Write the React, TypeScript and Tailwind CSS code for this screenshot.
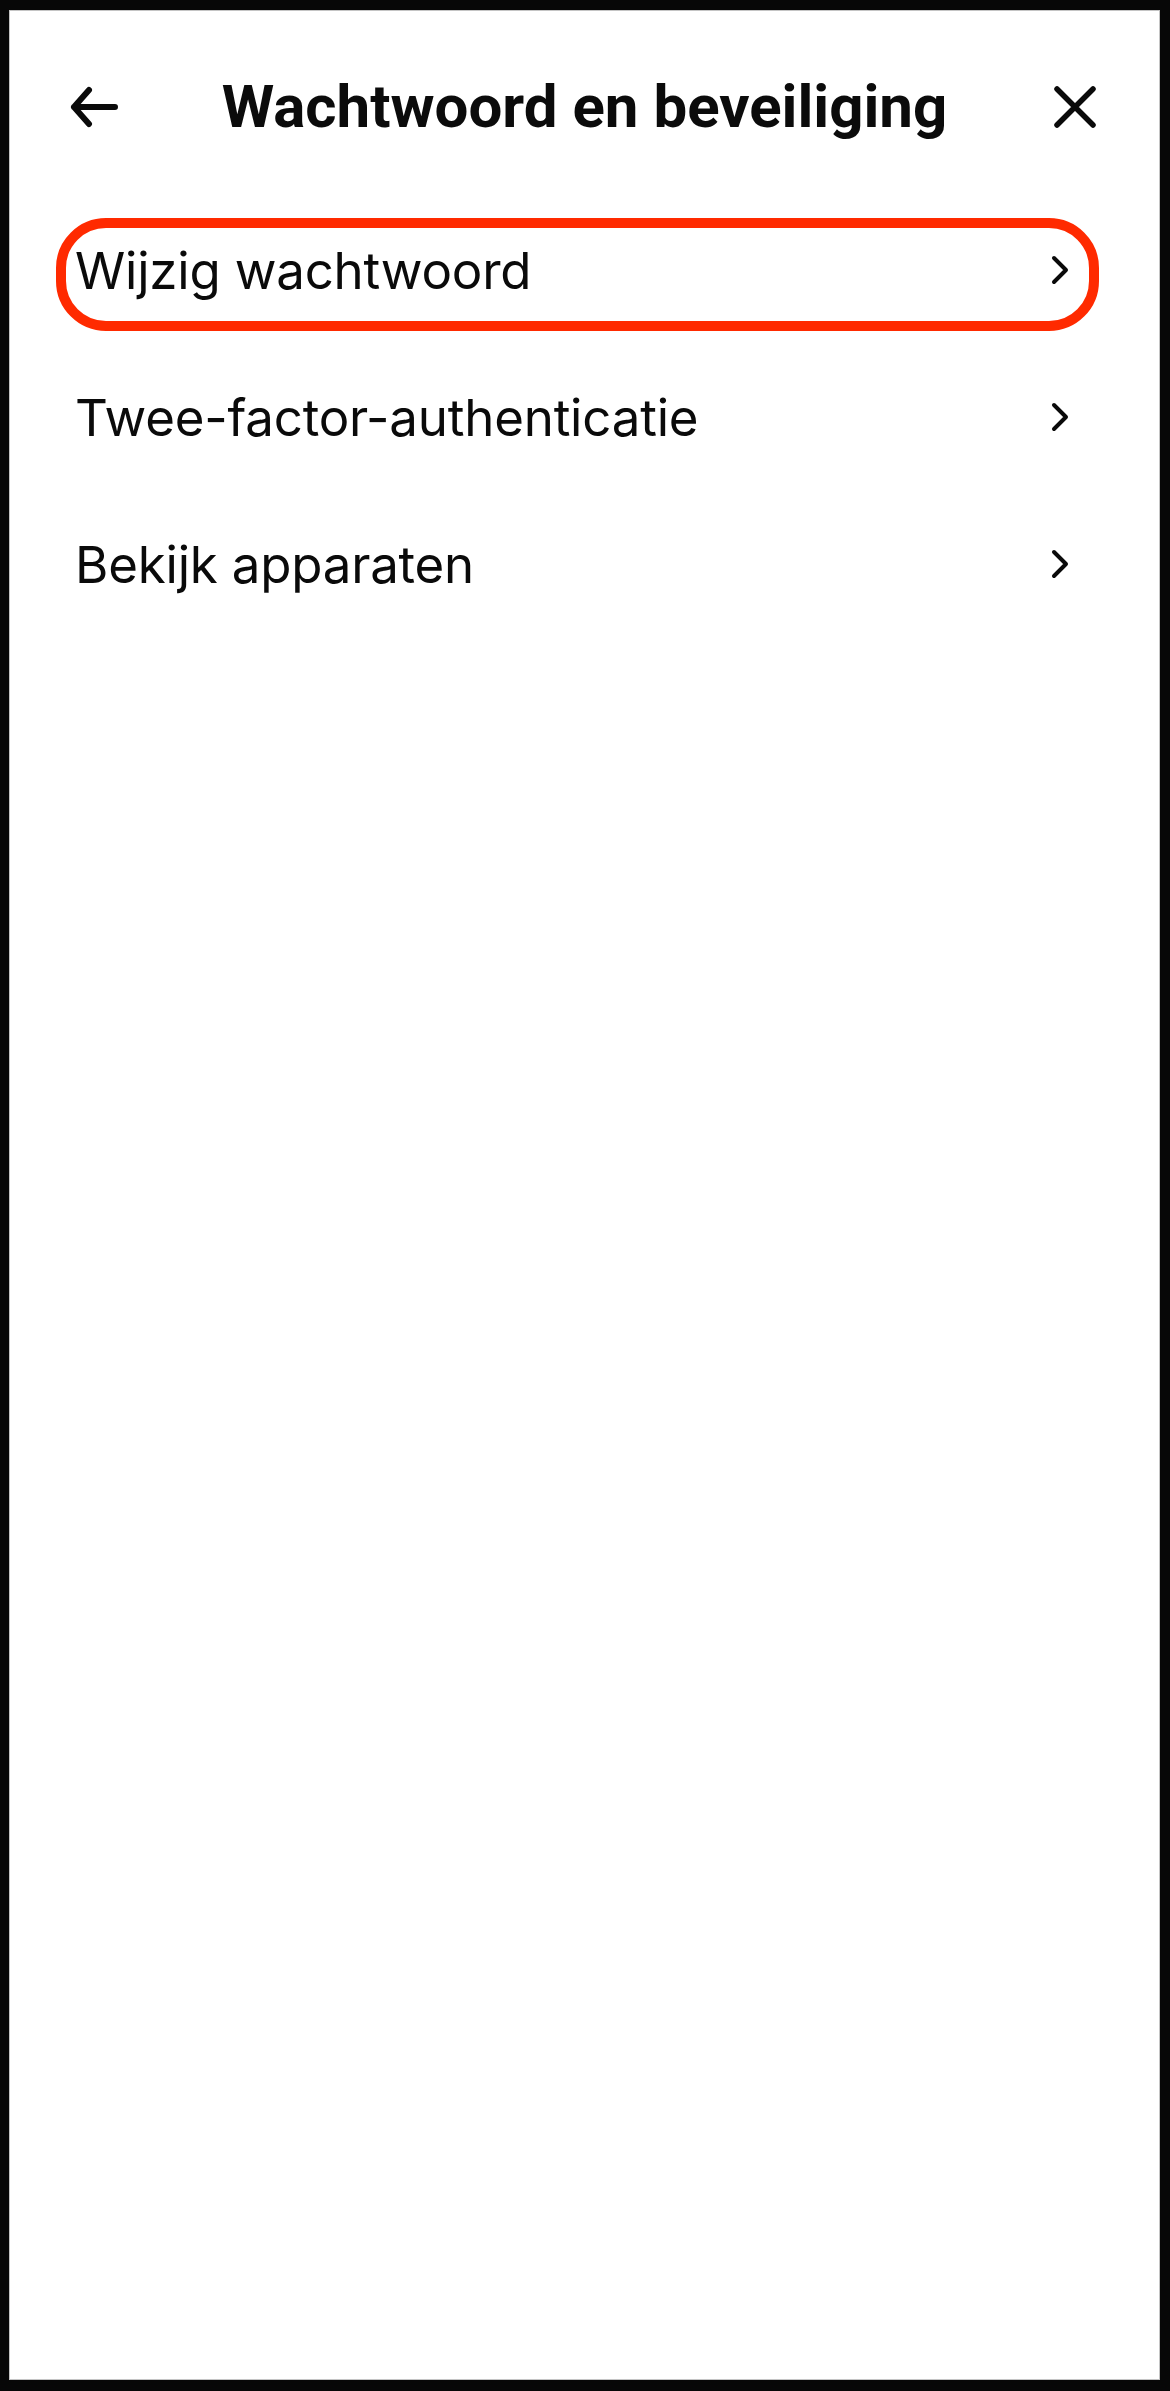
import React from "react";

const items = [
  { label: "Wijzig wachtwoord", highlighted: true },
  { label: "Twee-factor-authenticatie", highlighted: false },
  { label: "Bekijk apparaten", highlighted: false },
];

function BackArrow() {
  return (
    <svg width="48" height="42" viewBox="0 0 48 42" fill="none" className="shrink-0">
      <path
        d="M4 21H45M4 21L19 4M4 21L19 38"
        stroke="#0a0a0a"
        strokeWidth="6"
        strokeLinecap="round"
        strokeLinejoin="round"
      />
    </svg>
  );
}

function CloseIcon() {
  return (
    <svg width="48" height="42" viewBox="0 0 48 42" fill="none" className="shrink-0">
      <path
        d="M6 3L42 39M42 3L6 39"
        stroke="#0a0a0a"
        strokeWidth="5.5"
        strokeLinecap="round"
      />
    </svg>
  );
}

function Chevron() {
  return (
    <svg width="20" height="32" viewBox="0 0 20 32" fill="none" className="shrink-0">
      <path
        d="M4 4L16 16L4 28"
        stroke="#0a0a0a"
        strokeWidth="4"
        strokeLinecap="round"
        strokeLinejoin="round"
      />
    </svg>
  );
}

export default function App() {
  return (
    <div className="flex h-[2391px] w-[1170px] flex-col bg-[#070707] pb-[11px] pl-[9px] pr-[10px] pt-[10px]">
      <div className="flex flex-1 flex-col border border-[#c4c4c4] bg-white">
        <header className="flex h-[192px] items-center px-[60px]">
          <BackArrow />
          <h1
            className="flex-1 text-center text-[60px] font-bold leading-none text-[#0b0b0b]"
            style={{ fontFamily: "Roboto, 'Liberation Sans', sans-serif" }}
          >
            Wachtwoord en beveiliging
          </h1>
          <CloseIcon />
        </header>

        <ul
          className="flex flex-col gap-[34px] pl-[46px] pr-[60px] pt-[15px]"
          style={{ fontFamily: "Inter, 'Liberation Sans', sans-serif" }}
        >
          {items.map((item) => (
            <li
              key={item.label}
              className={
                item.highlighted
                  ? "flex h-[113px] items-center justify-between rounded-[50px] border-[10px] border-[#ff2a00] pb-[9px] pl-[9px] pr-[19px]"
                  : "flex h-[113px] items-center justify-between rounded-[50px] border-[10px] border-transparent pb-[9px] pl-[9px] pr-[19px]"
              }
            >
              <span className="text-[51px] leading-none tracking-[-0.2px] text-[#0a0a0a]">
                {item.label}
              </span>
              <Chevron />
            </li>
          ))}
        </ul>
      </div>
    </div>
  );
}
